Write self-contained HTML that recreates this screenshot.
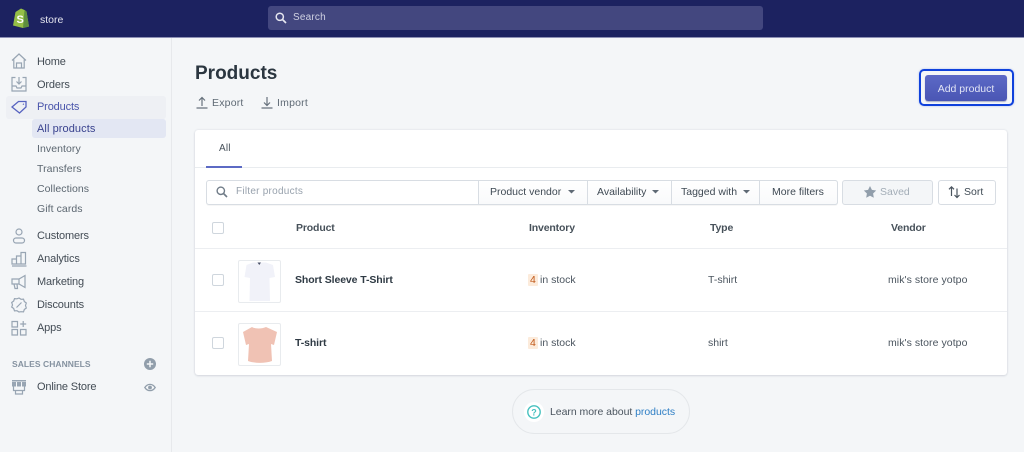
<!DOCTYPE html>
<html style="background:#f4f6f8"><head><meta charset="utf-8"><style>
*{box-sizing:border-box}
html,body{margin:0;padding:0}
body{width:1024px;height:452px;overflow:hidden;position:relative;background:#f4f6f8;font-family:"Liberation Sans",sans-serif;font-size:11px;color:#3f4a54}
.t{position:absolute;white-space:nowrap;line-height:14px;margin-top:1px;filter:blur(.25px)}
.a{position:absolute}
svg{position:absolute;overflow:visible;filter:blur(.25px)}
.n{color:#434c55;letter-spacing:-.15px;font-size:11px}
.s{color:#5b6670;letter-spacing:.07px;font-size:10.5px}
.b{color:#3f4a54;letter-spacing:0;font-size:10.5px}
.h{font-weight:bold;color:#47515a;font-size:10.5px;letter-spacing:-.15px}
.i{fill:none;stroke:#98a5b3;stroke-width:1.2}
</style></head><body>
<div class="a" style="left:0;top:0;width:1024px;height:38px;background:#1c2260;border-bottom:1px solid #8d90b5"></div>
<svg style="left:12px;top:7px" width="18" height="22" viewBox="0 0 18 22"><path d="M1 18.500 3.500 5 9 1.500l3.500 1.500 2 1.500 2.500 15-6 1.500z" fill="#95bf47"/><path d="M12.500 3 14.500 4.500 17 19.500 11 21z" fill="#5e8e3e"/><text x="4.500" y="16" font-family="Liberation Sans" font-weight="bold" font-size="11" fill="#fff">S</text></svg>
<div class="t" style="left:40px;top:12px;color:#e4e5ee;font-size:10.500px;letter-spacing:0">store</div>
<div class="a" style="left:268px;top:6px;width:495px;height:24px;background:#43477f;border-radius:3px"></div>
<svg style="left:275px;top:12px" width="12" height="12" viewBox="0 0 12 12"><circle cx="4.800" cy="4.800" r="3.600" fill="none" stroke="#e6e7f0" stroke-width="1.500"/><path d="M7.500 7.500 11 11" stroke="#e6e7f0" stroke-width="1.700"/></svg>
<div class="t" style="left:293px;top:10px;color:#cfd1e2;font-size:10px;letter-spacing:.2px">Search</div>

<div class="a" style="left:171px;top:38px;width:1px;height:414px;background:#e7e9ec"></div>
<div class="a" style="left:6px;top:96px;width:160px;height:23px;background:#eef0f4;border-radius:3px"></div>
<div class="a" style="left:32px;top:119px;width:134px;height:19px;background:#e3e7f3;border-radius:3px"></div>

<svg style="left:11px;top:53px" width="16" height="16" viewBox="0 0 16 16"><path class="i" d="M1 7.500 8 1l7 6.500M2.800 6.500V15h10.400V6.500M5.500 15v-5h5v5"/></svg>
<svg style="left:11px;top:76px" width="16" height="16" viewBox="0 0 16 16"><path class="i" d="M4.500 1.500H1v13.500h14V1.500h-3.500M1 10h4l1 2h4l1-2h4M8 1v7M5.500 5.500 8 8l2.500-2.500"/></svg>
<svg style="left:11px;top:99px" width="16" height="16" viewBox="0 0 16 16"><path fill="none" stroke="#5763c0" stroke-width="1.300" d="M1 8 7.500 2.500h7.500v5.500L8.500 14zM12 4.800l.8.8"/></svg>
<svg style="left:11px;top:228px" width="16" height="16" viewBox="0 0 16 16"><circle class="i" cx="8" cy="4" r="3"/><rect class="i" x="2.500" y="10" width="11" height="5" rx="2.500"/></svg>
<svg style="left:11px;top:251px" width="16" height="16" viewBox="0 0 16 16"><path class="i" d="M1 8h4.500v5H1zM5.500 5h4.500v8H5.500zM10 1.500h4.500V13H10zM1 15h14.500"/></svg>
<svg style="left:11px;top:274px" width="16" height="16" viewBox="0 0 16 16"><path class="i" d="M1 5h7l6-3.500v12L8 10H1zM3 10l1 4.500h2.500L6 10M8 5v5"/></svg>
<svg style="left:11px;top:297px" width="16" height="16" viewBox="0 0 16 16"><path class="i" d="M8 1l2 1.300 2.500-.2.800 2.400 2 1.500-.8 2.500.8 2.500-2 1.500-.8 2.400-2.500-.2L8 15l-2-1.300-2.500.2-.8-2.400-2-1.500L1.500 8 .7 5.500l2-1.500.8-2.400 2.500.2z"/><path class="i" d="M5.500 10.500l5-5M5.500 5.800h.1M10.500 10.200h.1"/></svg>
<svg style="left:11px;top:320px" width="16" height="16" viewBox="0 0 16 16"><path class="i" d="M1 1.500h5.500V7H1zM1 9.500h5.500V15H1zM9.500 9.500H15V15H9.500zM12.200 1v6M9.200 4h6"/></svg>
<svg style="left:11px;top:379px" width="16" height="16" viewBox="0 0 16 16"><path fill="#98a5b3" d="M1 1h14v1.500H1zM1 3h14v4.500H1z"/><path class="i" d="M2.500 7.500v4h11v-4M4.500 11.500V15h7v-3.500"/><path d="M5.500 3v4.500M10.500 3v4.500" stroke="#f4f6f8"/></svg>

<div class="t n" style="left:37px;top:54px">Home</div>
<div class="t n" style="left:37px;top:77px">Orders</div>
<div class="t n" style="left:37px;top:99px;color:#4a55ab">Products</div>
<div class="t n" style="left:37px;top:121px;color:#3a438f;letter-spacing:.08px">All products</div>
<div class="t s" style="left:37px;top:141px">Inventory</div>
<div class="t s" style="left:37px;top:161px">Transfers</div>
<div class="t s" style="left:37px;top:181px">Collections</div>
<div class="t s" style="left:37px;top:201px">Gift cards</div>
<div class="t n" style="left:37px;top:228px">Customers</div>
<div class="t n" style="left:37px;top:251px">Analytics</div>
<div class="t n" style="left:37px;top:274px">Marketing</div>
<div class="t n" style="left:37px;top:297px">Discounts</div>
<div class="t n" style="left:37px;top:320px">Apps</div>
<div class="t" style="left:12px;top:356px;font-size:8.500px;color:#8592a0;letter-spacing:.05px;font-weight:bold">SALES CHANNELS</div>
<div class="t n" style="left:37px;top:379px">Online Store</div>
<svg style="left:144px;top:358px" width="12" height="12" viewBox="0 0 12 12"><circle cx="6" cy="6" r="6" fill="#919eab"/><path d="M6 2.800v6.400M2.800 6h6.400" stroke="#f4f6f8" stroke-width="1.500"/></svg>
<svg style="left:144px;top:383px" width="12" height="9" viewBox="0 0 12 9"><path d="M.8 4.500C3.500.3 8.500.3 11.200 4.500 8.500 8.700 3.500 8.700.8 4.500z" fill="none" stroke="#919eab" stroke-width="1.300"/><circle cx="6" cy="4.500" r="1.900" fill="#919eab"/></svg>

<div class="t" style="left:195px;top:62px;line-height:22px;font-size:19px;font-weight:bold;color:#2b3640">Products</div>
<svg style="left:196px;top:96px" width="12" height="13" viewBox="0 0 12 13"><path d="M6 10V2M3 4.500 6 1.500l3 3M.5 12h11" fill="none" stroke="#67727d" stroke-width="1.200"/></svg>
<div class="t" style="left:212px;top:95px;font-size:10.500px;letter-spacing:.2px;color:#5f6a75">Export</div>
<svg style="left:261px;top:96px" width="12" height="13" viewBox="0 0 12 13"><path d="M6 1v8M3 6.500l3 3 3-3M.5 12h11" fill="none" stroke="#67727d" stroke-width="1.200"/></svg>
<div class="t" style="left:277px;top:95px;font-size:10.500px;letter-spacing:.2px;color:#5f6a75">Import</div>

<div class="a" style="left:919px;top:69px;width:95px;height:37px;border:2px solid #0f41dc;border-radius:5px;background:#f4f6f8;box-shadow:0 0 2px rgba(15,65,220,.3)"></div>
<div class="a" style="left:925px;top:75px;width:82px;height:26px;border-radius:3px;background:linear-gradient(#5c69c6,#4a56b4);box-shadow:0 1px 1px rgba(30,40,110,.35)"></div>
<div class="t" style="left:925px;top:81px;width:82px;text-align:center;color:#e2e5f5;font-size:10.500px;letter-spacing:0">Add product</div>

<div class="a" style="left:195px;top:130px;width:812px;height:245px;background:#fff;border-radius:3px;box-shadow:0 0 2px rgba(50,60,90,.12),0 1px 2px rgba(50,60,90,.12)"></div>
<div class="t" style="left:219px;top:141px;font-size:10px;letter-spacing:.2px;color:#47515a">All</div>
<div class="a" style="left:195px;top:167px;width:812px;height:1px;background:#e9ecef"></div>
<div class="a" style="left:206px;top:166px;width:36px;height:2px;background:#5c6ac4"></div>

<div class="a" style="left:206px;top:180px;width:632px;height:25px;background:#fff;border:1px solid #d8dde3;border-radius:3px;box-shadow:0 1px 0 rgba(22,29,37,.04)"></div>
<div class="a" style="left:478px;top:180px;width:360px;height:25px;background:linear-gradient(#fff,#f9fafb);border:1px solid #d8dde3;border-radius:0 3px 3px 0"></div>
<div class="a" style="left:587px;top:180px;width:1px;height:25px;background:#d8dde3"></div>
<div class="a" style="left:671px;top:180px;width:1px;height:25px;background:#d8dde3"></div>
<div class="a" style="left:759px;top:180px;width:1px;height:25px;background:#d8dde3"></div>
<svg style="left:216px;top:186px" width="12" height="12" viewBox="0 0 12 12"><circle cx="4.800" cy="4.800" r="3.700" fill="none" stroke="#6f7b87" stroke-width="1.400"/><path d="M7.500 7.500 11 11" stroke="#6f7b87" stroke-width="1.600"/></svg>
<div class="t" style="left:236px;top:184px;font-size:10px;letter-spacing:.25px;color:#98a2ad">Filter products</div>
<div class="t b" style="left:490px;top:184px">Product vendor</div>
<div class="t b" style="left:597px;top:184px">Availability</div>
<div class="t b" style="left:681px;top:184px">Tagged with</div>
<div class="t b" style="left:772px;top:184px">More filters</div>
<svg style="left:568px;top:190px" width="8" height="4"><path d="M0 0h7L3.500 3.500z" fill="#5f6a75"/></svg>
<svg style="left:652px;top:190px" width="8" height="4"><path d="M0 0h7L3.500 3.500z" fill="#5f6a75"/></svg>
<svg style="left:743px;top:190px" width="8" height="4"><path d="M0 0h7L3.500 3.500z" fill="#5f6a75"/></svg>

<div class="a" style="left:842px;top:180px;width:91px;height:25px;background:#f4f6f8;border:1px solid #d8dde3;border-radius:3px"></div>
<svg style="left:863px;top:185px" width="14" height="14" viewBox="0 0 14 14"><path d="M7 1l1.900 3.900 4.300.6-3.100 3 .7 4.300L7 10.800l-3.800 2 .7-4.300-3.100-3 4.300-.6z" fill="#919eab"/></svg>
<div class="t" style="left:880px;top:184px;font-size:10.500px;letter-spacing:0;color:#a3adb7">Saved</div>
<div class="a" style="left:938px;top:180px;width:58px;height:25px;background:#fff;border:1px solid #d8dde3;border-radius:3px"></div>
<svg style="left:948px;top:185px" width="13" height="14" viewBox="0 0 13 14"><path d="M3.500 11V2M1 4.300 3.500 1.800 6 4.300M9 3.500v9M6.500 10 9 12.500 11.500 10" fill="none" stroke="#4b555f" stroke-width="1.200"/></svg>
<div class="t b" style="left:964px;top:184px">Sort</div>

<div class="a" style="left:212px;top:222px;width:12px;height:12px;border:1px solid #cfd6dd;border-radius:2px;background:#fff"></div>
<div class="t h" style="left:296px;top:220px">Product</div>
<div class="t h" style="left:529px;top:220px">Inventory</div>
<div class="t h" style="left:710px;top:220px">Type</div>
<div class="t h" style="left:891px;top:220px">Vendor</div>
<div class="a" style="left:195px;top:248px;width:812px;height:1px;background:#eceef1"></div>
<div class="a" style="left:195px;top:311px;width:812px;height:1px;background:#eceef1"></div>

<div class="a" style="left:212px;top:274px;width:12px;height:12px;border:1px solid #cfd6dd;border-radius:2px;background:#fff"></div>
<div class="a" style="left:212px;top:337px;width:12px;height:12px;border:1px solid #cfd6dd;border-radius:2px;background:#fff"></div>
<div class="a" style="left:238px;top:260px;width:43px;height:43px;border:1px solid #e8ebee;border-radius:2px;background:#fff"></div>
<div class="a" style="left:238px;top:323px;width:43px;height:43px;border:1px solid #e8ebee;border-radius:2px;background:#fff"></div>
<svg style="left:238px;top:260px" width="43" height="43" viewBox="0 0 43 43"><path d="M15 2.500h13l7 2.500 2 12-5.500 1 .5 23H11.500l.5-23-5.500-1 2-12z" fill="#f1f2f9"/><path d="M19.500 2.500h3.500l-1.700 2.500z" fill="#4a5068"/></svg>
<svg style="left:238px;top:323px" width="43" height="43" viewBox="0 0 43 43"><path d="M14 4c3 2 10 2 14 0l11 5-3 13-3-1 1 17c-7 2.500-17 2.500-24 0l1-17-3 1-3-13z" fill="#f0c2b4"/></svg>

<div class="t" style="left:295px;top:272px;font-weight:bold;font-size:10.500px;letter-spacing:-.1px;color:#2f3a44">Short Sleeve T-Shirt</div>
<div class="t" style="left:295px;top:335px;font-weight:bold;font-size:10.500px;letter-spacing:-.1px;color:#2f3a44">T-shirt</div>

<div class="a" style="left:528px;top:274px;width:10px;height:12px;background:#fcebdb;border-radius:1px"></div>
<div class="a" style="left:528px;top:337px;width:10px;height:12px;background:#fcebdb;border-radius:1px"></div>
<div class="t" style="left:530px;top:272px;font-size:10.500px;color:#c05717">4</div>
<div class="t" style="left:530px;top:335px;font-size:10.500px;color:#c05717">4</div>
<div class="t b" style="left:540px;top:272px;color:#4b555f">in stock</div>
<div class="t b" style="left:540px;top:335px;color:#4b555f">in stock</div>
<div class="t b" style="left:708px;top:272px;color:#4b555f">T-shirt</div>
<div class="t b" style="left:708px;top:335px;color:#4b555f">shirt</div>
<div class="t b" style="left:888px;top:272px;color:#4b555f;letter-spacing:.06px">mik's store yotpo</div>
<div class="t b" style="left:888px;top:335px;color:#4b555f;letter-spacing:.06px">mik's store yotpo</div>

<div class="a" style="left:512px;top:389px;width:178px;height:45px;border:1px solid #e4e7ea;border-radius:23px"></div>
<div class="a" style="left:524px;top:402px;width:20px;height:20px;background:#fff;border-radius:50%"></div>
<svg style="left:527px;top:405px" width="14" height="14" viewBox="0 0 14 14"><circle cx="7" cy="7" r="6.200" fill="none" stroke="#47c1bf" stroke-width="1.400"/><text x="7" y="10.300" text-anchor="middle" font-family="Liberation Sans" font-weight="bold" font-size="9" fill="#47c1bf">?</text></svg>
<div class="t" style="left:550px;top:404px;font-size:10.500px;letter-spacing:-.04px;color:#4b555f">Learn more about <span style="color:#2f7fc5">products</span></div>
</body></html>
